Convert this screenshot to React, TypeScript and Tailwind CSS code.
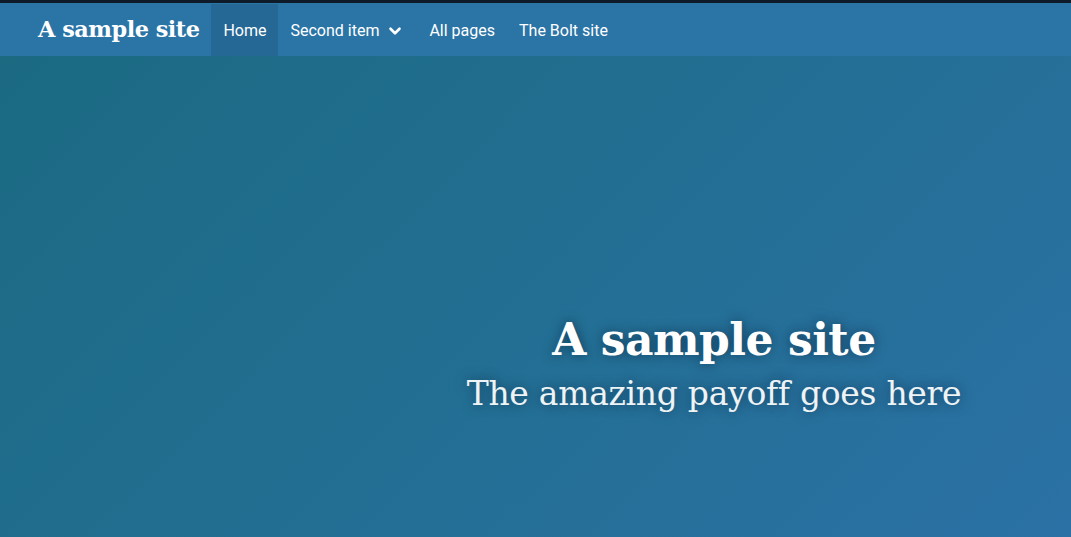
import { ChevronDown } from "lucide-react";

const navItems = [
  { label: "Home", active: true },
  { label: "Second item", dropdown: true },
  { label: "All pages" },
  { label: "The Bolt site" },
];

export default function App() {
  return (
    <div className="min-h-[537px] w-full bg-[#1d6b86] font-['Roboto',sans-serif]">
      {/* top border strip */}
      <div className="h-[4px] border-t-[3px] border-[#0e1b29] bg-[#2b74a6]" />

      {/* NAVBAR */}
      <nav className="flex h-[52px] items-stretch bg-[#2b74a6] pl-[38px] text-white">
        <a className="flex items-center pr-[12px] font-['DejaVu_Serif',serif] text-[22.4px] font-bold tracking-[-0.5px]">
          A sample site
        </a>
        <ul className="flex items-stretch">
          {navItems.map((item) => (
            <li
              key={item.label}
              className={`flex items-center px-[12px] pt-[1px] text-[16px] ${item.active ? "bg-[#266895]" : ""}`}
            >
              {item.label}
              {item.dropdown && <ChevronDown size={18} strokeWidth={3.5} className="ml-[7px] mr-[1px]" />}
            </li>
          ))}
        </ul>
      </nav>

      {/* HERO */}
      <section className="grid h-[481px] grid-cols-3 bg-[linear-gradient(135deg,#1b6a82_0%,#236f95_55%,#2b71a5_100%)]">
        <div className="col-span-2 col-start-2 flex flex-col items-center pt-[254px] text-center font-['DejaVu_Serif',serif] [text-shadow:0_0_12px_rgba(0,20,40,0.55)]">
          <h1 className="text-[44px] leading-[60px] font-bold tracking-[-0.5px] text-white">A sample site</h1>
          <p className="mt-[3px] text-[33px] leading-[42px] font-light tracking-[-0.3px] text-[#eef3f6]">
            The amazing payoff goes here
          </p>
        </div>
      </section>
    </div>
  );
}
